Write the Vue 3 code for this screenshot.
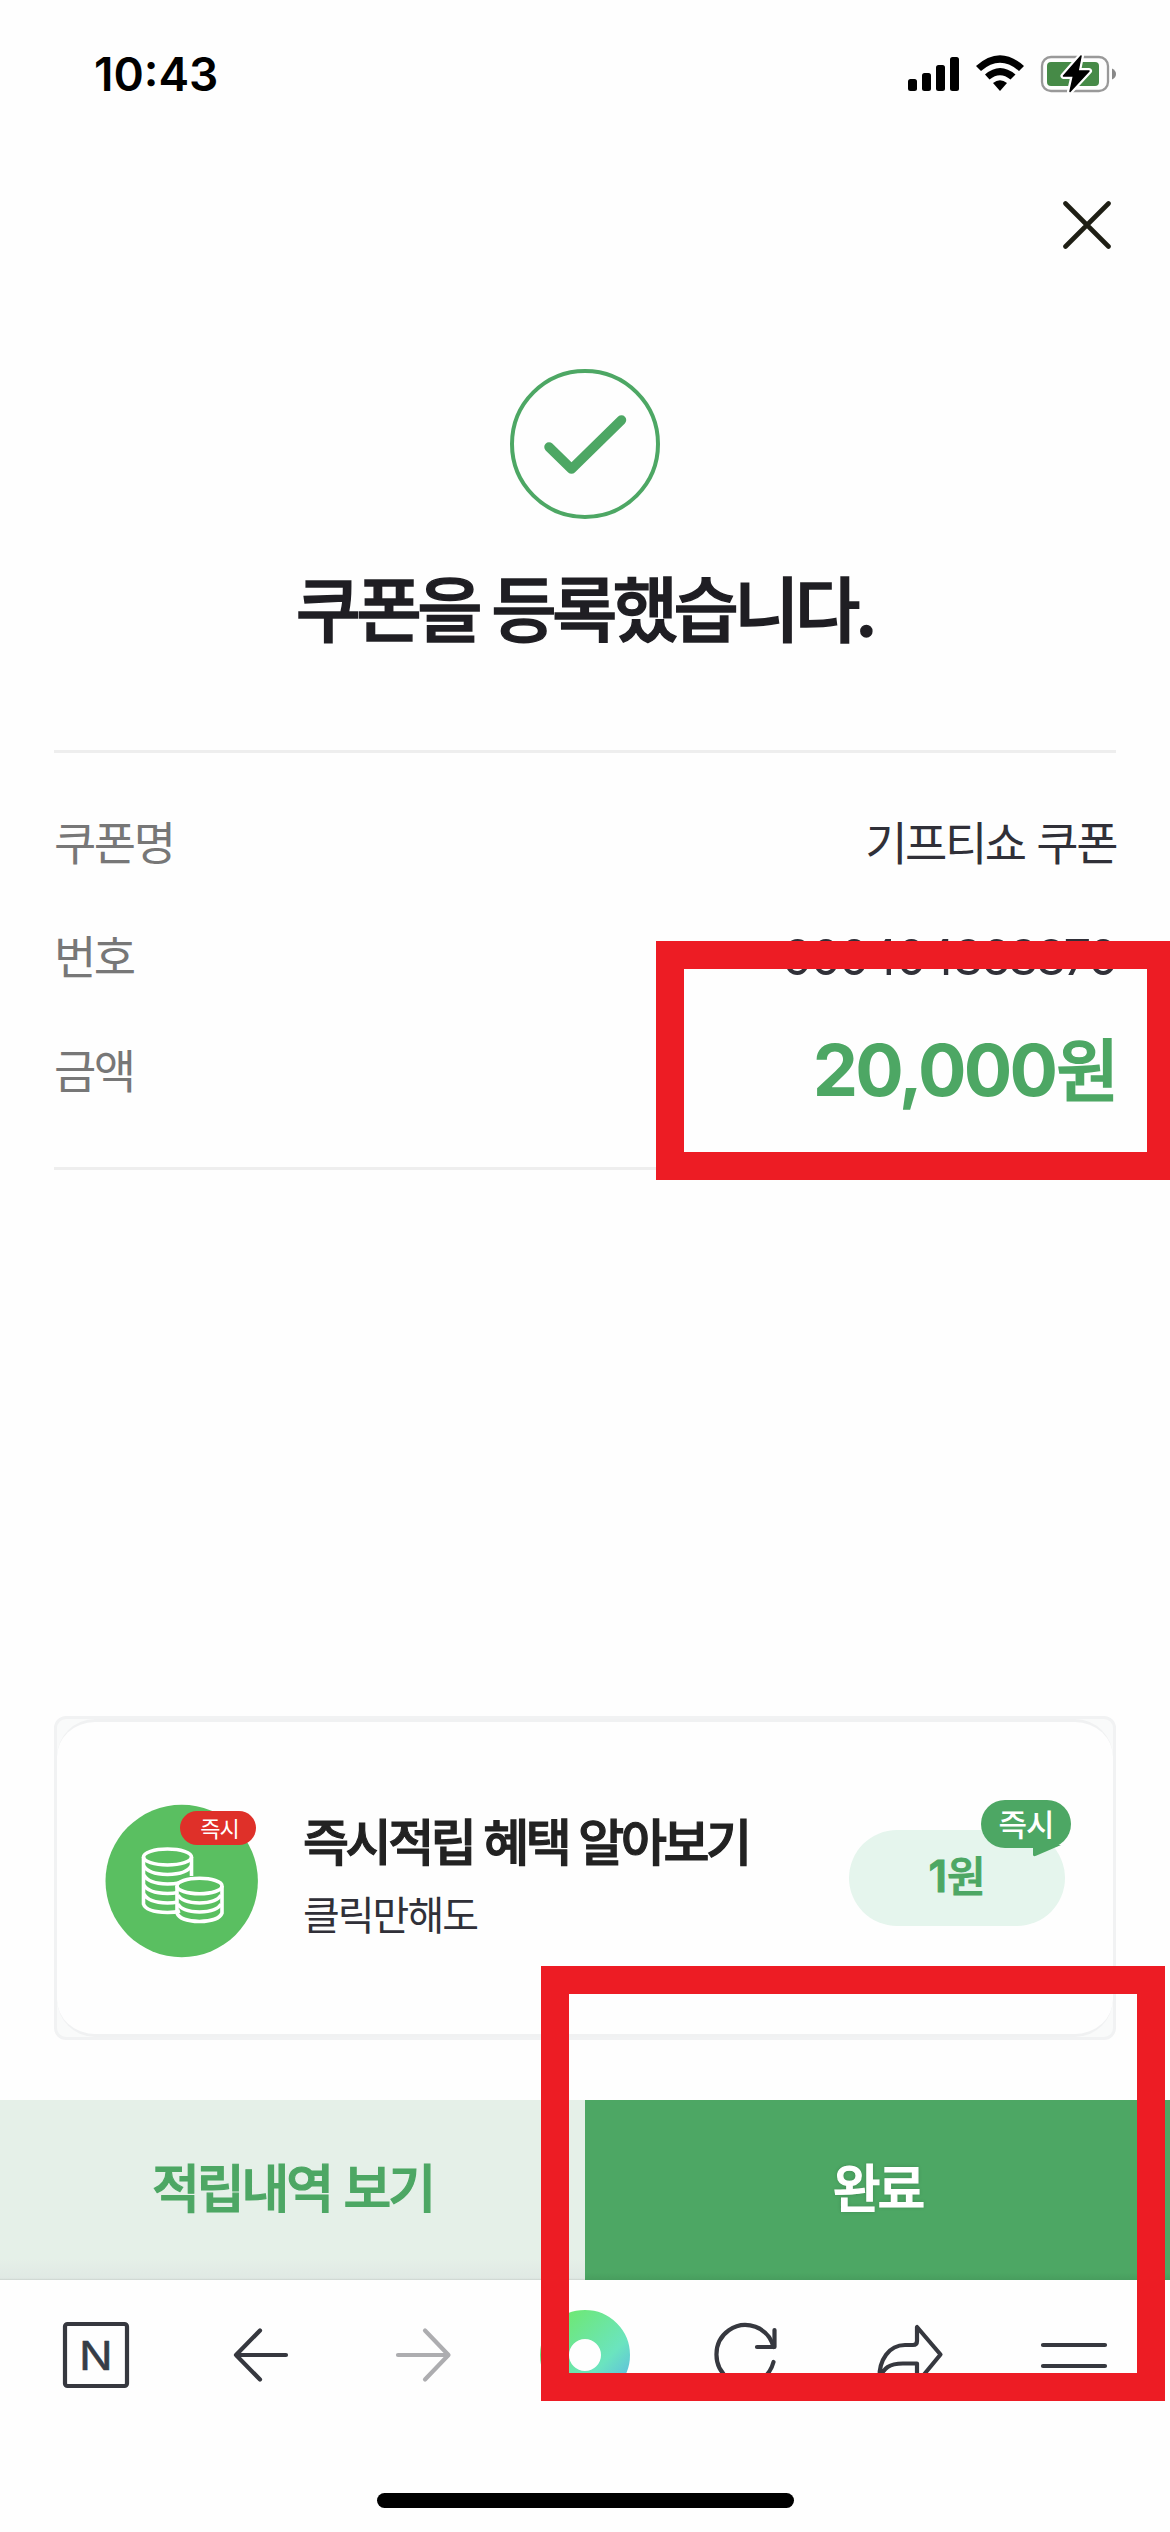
<script setup>
const rows = [
  { label: '쿠폰명', value: '기프티쇼 쿠폰', kind: 'text' },
  { label: '번호', value: '900404363870', kind: 'number' },
  { label: '금액', value: '20,000', unit: '원', kind: 'amount' },
]
</script>

<template>
  <main class="screen">
    <header class="status">
      <span class="time">10:43</span>
      <svg class="status-icons" width="210" height="40" viewBox="906 54 210 40">
        <rect x="907" y="79" width="9" height="12" rx="2.5" />
        <rect x="921" y="73" width="9" height="18" rx="2.5" />
        <rect x="935" y="65" width="9" height="26" rx="2.5" />
        <rect x="949" y="57" width="9" height="34" rx="2.5" />
        <path d="M975 66 Q999 44.500 1023 66 L1018 71 Q999 54.500 980 71 Z" />
        <path d="M984 74.500 Q999 61.500 1014.500 74.500 L1009.500 79.500 Q999 71 988.500 79.500 Z" />
        <path d="M992 83 Q999 77.500 1006 83 L999 91 Z" />
        <rect x="1041" y="57" width="66" height="34" rx="9" fill="none" stroke="#999" stroke-width="2.300" />
        <path d="M1111 68.500 Q1115 70.500 1115 74 Q1115 77.500 1111 79.500 Z" fill="#888" />
        <rect x="1046" y="62" width="52" height="24" rx="4" fill="#468a47" />
        <path d="M1080 56 L1062.500 76 H1072.500 L1069 91.500 L1088 71 H1077 Z" stroke="#fff" stroke-width="6" stroke-linejoin="round" />
        <path d="M1080 56 L1062.500 76 H1072.500 L1069 91.500 L1088 71 H1077 Z" stroke="#000" stroke-width="1.500" stroke-linejoin="round" />
      </svg>
    </header>

    <nav class="close-row">
      <svg width="48" height="48" viewBox="0 0 48 48" fill="none" stroke="#1e1e14" stroke-width="4.600" stroke-linecap="round">
        <path d="M2.500 2.500 L45.500 45.500 M45.500 2.500 L2.500 45.500" />
      </svg>
    </nav>

    <section class="result">
      <svg width="150" height="150" viewBox="0 0 150 150" fill="none" stroke="#4da764">
        <circle cx="75" cy="75" r="73" stroke-width="4" />
        <path d="M39 78 L61.500 100 L111.500 51" stroke-width="9.500" stroke-linecap="round" stroke-linejoin="round" />
      </svg>
      <h1>쿠폰을 등록했습니다.</h1>
    </section>

    <dl class="details">
      <div v-for="row in rows" :key="row.label" class="row">
        <dt>{{ row.label }}</dt>
        <dd :class="row.kind">{{ row.value }}<span v-if="row.unit">{{ row.unit }}</span></dd>
      </div>
      <i class="mark mark-amount"></i>
    </dl>

    <section class="promo">
      <div class="promo-inner">
        <svg class="coins" width="154" height="154" viewBox="105 1804 154 154">
          <circle cx="181.700" cy="1881" r="76.200" fill="#5abf61" />
          <g fill="none" stroke="#fff" stroke-width="3.600">
            <ellipse cx="167.500" cy="1857" rx="24" ry="8" />
            <path d="M143.500 1857 V1904 Q146 1912 167.500 1912.500 Q175 1912.500 180 1911" />
            <path d="M191.500 1857 V1876" />
            <path d="M144 1866 Q148 1874 167.500 1874.500 Q187 1874 191 1866" />
            <path d="M144 1875 Q148 1883.500 167.500 1884 Q174 1884 179 1883" />
            <path d="M144 1885 Q148 1893 167.500 1893.500 Q173 1893.500 178 1892.500" />
            <path d="M144 1894 Q148 1902.500 167.500 1903 Q173 1903 178 1902" />
            <ellipse cx="199.500" cy="1886" rx="22.500" ry="7.700" />
            <path d="M177 1886 V1913 Q180 1921 199.500 1921.500 Q219 1921 222 1913 V1886" />
            <path d="M178 1895 Q182 1902.500 199.500 1903 Q217 1902.500 221 1895" />
            <path d="M178 1904 Q182 1911.500 199.500 1912 Q217 1911.500 221 1904" />
          </g>
        </svg>
        <span class="tag">즉시</span>
        <div class="promo-text">
          <strong>즉시적립 혜택 알아보기</strong>
          <span>클릭만해도</span>
        </div>
        <div class="pill">
          <span class="pill-text"><b>1</b>원</span>
          <span class="bubble">즉시
            <svg width="28" height="12" viewBox="0 0 28 12"><path d="M0 0 H28 V0 L3 10.800 Q0 12 0 9.500 Z" fill="#4da764" /></svg>
          </span>
        </div>
      </div>
    </section>

    <div class="actions">
      <button class="ghost">적립내역 보기</button>
      <button class="solid">완료</button>
    </div>

    <footer class="toolbar">
      <svg width="1170" height="130" viewBox="0 2280 1170 130" fill="none" stroke="#36383f" stroke-width="4.200" stroke-linecap="round" stroke-linejoin="round">
        <defs>
          <linearGradient id="orb" gradientUnits="userSpaceOnUse" x1="555" y1="2320" x2="625" y2="2390">
            <stop offset="0" stop-color="#6ee870" />
            <stop offset="0.650" stop-color="#6be4bf" />
            <stop offset="1" stop-color="#5cb8e4" />
          </linearGradient>
        </defs>
        <rect x="65" y="2324" width="62" height="62" rx="2.500" />
        <text class="n" transform="translate(96 2370) scale(1.120 1)" text-anchor="middle">N</text>
        <path d="M236 2355 H286 M260 2330.500 L236 2355 L260 2379.500" />
        <path d="M398 2355 H448 M425 2330.500 L448.500 2355 L425 2379.500" stroke="#adadb0" />
        <circle cx="585" cy="2355" r="30.500" stroke="url(#orb)" stroke-width="29" />
        <path d="M773.500 2347 A29 29.500 0 1 0 773.500 2362" />
        <path d="M774.500 2330 V2347 H757" />
        <path d="M917 2327 V2341 Q917 2345 913 2345 H905 C889 2345 879 2360 879.500 2378 C884 2368 889 2363.500 903 2363.500 H917 V2383 L940.500 2354.500 Z" />
        <path d="M1043 2345 H1105 M1043 2366 H1105" />
      </svg>
      <i class="home"></i>
    </footer>
    <i class="mark mark-done"></i>
  </main>
</template>

<style>
body { margin: 0; background: #fff; }
</style>

<style scoped>
* { box-sizing: border-box; }
.screen {
  position: relative;
  display: flex;
  flex-direction: column;
  width: 1170px;
  height: 2532px;
  overflow: hidden;
  background: #fefefe;
  color: #303038;
  font-family: "Noto Sans CJK KR", sans-serif;
}
svg { display: block; flex: none; }
.status { display: flex; justify-content: space-between; height: 201px; padding: 54px 54px 0 94px; }
.time { font: 600 46px/40px Inter, sans-serif; color: #000; letter-spacing: 0; }
.status-icons { margin-right: -1px; }
.close-row { display: flex; justify-content: flex-end; height: 168px; padding-right: 59px; }
.result { display: flex; flex-direction: column; align-items: center; height: 381px; }
h1 { margin: 36px 2px 0 0; font-size: 71px; line-height: 100px; font-weight: 500; letter-spacing: -4.600px; word-spacing: 2px; white-space: nowrap; color: #1f1e23; -webkit-text-stroke: 1.500px #1f1e23; }
.details { position: relative; height: 420px; margin: 0 54px; padding: 30px 0 0; border-top: 3px solid #eee; border-bottom: 3px solid #eee; }
.row { display: flex; justify-content: space-between; align-items: center; height: 114px; }
dt { color: #777; font-size: 46px; letter-spacing: -2.500px; }
dd { margin: 0; }
.text { font-size: 46px; letter-spacing: -2.500px; word-spacing: 4px; }
.number { padding-top: 7px; font-family: Inter, sans-serif; font-size: 49px; letter-spacing: -2.700px; }
.amount { color: #4da764; font: 700 72px/80px Inter, sans-serif; letter-spacing: -2.800px; }
.amount span { margin-left: 1px; font-family: "Noto Sans CJK KR", sans-serif; font-size: 68px; font-weight: 500; -webkit-text-stroke: 1.600px #4da764; }
.mark { position: absolute; border: 28px solid #ed1c24; }
.mark-amount { left: 602px; top: 188px; width: 514px; height: 239px; border-right-width: 23px; }
.mark-done { left: 541px; top: 1966px; width: 624px; height: 435px; }
.promo { margin: 546px 54px 0; height: 324px; border: 3px solid #f1f2f3; border-radius: 12px; background: #f9fafa; }
.promo-inner { position: relative; display: flex; align-items: center; height: 318px; padding: 0 48px; border: solid #f0f1f2; border-width: 3px 0; border-radius: 38px; background: #fefefe; }
.coins { margin-top: 6px; }
.tag { position: absolute; left: 123px; top: 89px; width: 76px; height: 34px; border-radius: 17px; background: #df3029; color: #fff; font-size: 22px; line-height: 33px; text-align: center; letter-spacing: -1px; padding-left: 3px; }
.promo-text { display: flex; flex-direction: column; margin-left: 44px; white-space: nowrap; }
strong { margin-top: -11px; padding-bottom: 7px; font-size: 50px; font-weight: 500; line-height: 74px; letter-spacing: -3.400px; word-spacing: 2px; color: #222; -webkit-text-stroke: 1.200px #222; }
.promo-text span { font-size: 40px; line-height: 60px; letter-spacing: -2px; }
.pill { position: relative; display: flex; justify-content: center; align-items: center; width: 216px; height: 96px; margin-left: auto; border-radius: 48px; background: #e5f5ed; color: #4da764; }
.pill-text { margin-top: -9px; font-size: 42px; font-weight: 500; -webkit-text-stroke: 1px #4da764; }
.pill-text b { font-family: Inter, sans-serif; font-size: 44px; font-weight: 600; }
.bubble { position: absolute; left: 132px; top: -30px; width: 90px; height: 48px; border-radius: 24px; background: #4da764; color: #fff; font-size: 31px; font-weight: 500; line-height: 46px; text-align: center; letter-spacing: -1px; }
.bubble svg { position: absolute; left: 52px; top: 45px; }
.actions { display: flex; height: 180px; margin-top: 60px; }
button { flex: 1; border: 0; padding: 0 0 9px; font: 500 52px "Noto Sans CJK KR", sans-serif; letter-spacing: -3.100px; word-spacing: 4px; -webkit-text-stroke: 1.200px currentColor; }
.ghost { color: #4da764; background: linear-gradient(#e5f0e8 88%, #e0e9e4 99%, #cbd3ce); }
.solid { color: #fff; background: linear-gradient(#4da764 96%, #489d5e); text-shadow: 0 0 4px rgba(0, 0, 0, 0.2); }
.toolbar { display: flex; flex-direction: column; align-items: center; height: 252px; }
.n { font: 400 40px Inter, sans-serif; fill: #363d47; stroke: #363d47; stroke-width: 0.500; }
.home { width: 417px; height: 15px; margin-top: 83px; border-radius: 8px; background: #000; }
</style>
